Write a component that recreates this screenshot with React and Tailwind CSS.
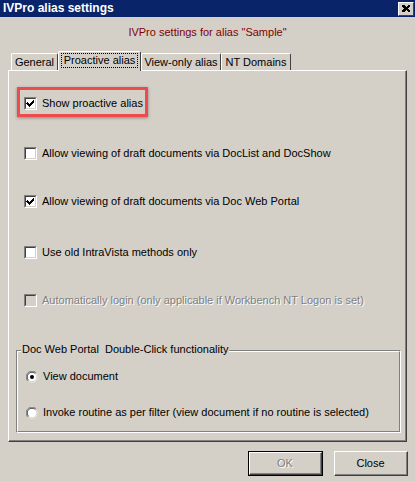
import React from "react";

function Check({ checked, disabled }) {
  return (
    <div className="w-[13px] h-[13px] shrink-0 border-t border-l border-[#808080] border-r border-b border-r-white border-b-white">
      <div
        className={
          "w-[11px] h-[11px] border-t border-l border-[#404040] border-r border-b border-r-[#d4d0c8] border-b-[#d4d0c8] flex items-center justify-center " +
          (disabled ? "bg-[#d4d0c8]" : "bg-white")
        }
      >
        {checked && (
          <svg width="9" height="9" viewBox="0 0 9 9" shapeRendering="crispEdges">
            <path d="M1 3h1v1h1v1h1v-1h1v-1h1v-1h1v-1h1v3h-1v1h-1v1h-1v1h-1v1h-1v-1h-1v-1h-1v-1h-1z" fill="#000" />
          </svg>
        )}
      </div>
    </div>
  );
}

function Radio({ checked }) {
  return (
    <svg width="12" height="12" viewBox="0 0 12 12" className="shrink-0">
      <circle cx="6" cy="6" r="5.5" fill="#fff" />
      <path d="M10.2 1.8A5.5 5.5 0 0 0 1.8 10.2" stroke="#808080" strokeWidth="1" fill="none" />
      <path d="M9.4 2.6A4.5 4.5 0 0 0 2.6 9.4" stroke="#404040" strokeWidth="1" fill="none" />
      <path d="M9.4 2.6A4.5 4.5 0 0 1 2.6 9.4" stroke="#d4d0c8" strokeWidth="1" fill="none" />
      {checked && <circle cx="6" cy="6" r="2" fill="#000" />}
    </svg>
  );
}

function Row({ checked, disabled, children, className }) {
  return (
    <div className={"flex items-center gap-[5px] " + (className || "")}>
      <Check checked={checked} disabled={disabled} />
      <span
        className={
          "leading-[13px] whitespace-nowrap " +
          (disabled ? "text-[#808080] [text-shadow:1px_1px_0_#fff]" : "")
        }
      >
        {children}
      </span>
    </div>
  );
}

const tabs = [
  { label: "General", w: "w-[47px]" },
  { label: "Proactive alias", w: "w-[83px]" },
  { label: "View-only alias", w: "w-[80px]" },
  { label: "NT Domains", w: "w-[70px]" },
];

export default function App() {
  return (
    <div className="w-[415px] h-[481px] bg-[#d4d0c8] font-['Liberation_Sans',Arial,sans-serif] text-[11px] text-black overflow-hidden select-none">
      {/* title bar */}
      <div className="h-[17px] bg-[#0a246a] flex items-center justify-between pl-[3px] pr-[1px]">
        <span className="text-white font-bold text-[12px] leading-[17px]">IVPro alias settings</span>
        <div className="w-[16px] h-[14px] bg-[#d4d0c8] border-t border-l border-white border-r border-b border-r-[#404040] border-b-[#404040] flex items-center justify-center">
          <svg width="8" height="7" viewBox="0 0 8 7" shapeRendering="crispEdges">
            <path d="M0 0h2l2 2 2-2h2v1l-2 2.5 2 2.5v1h-2l-2-2-2 2h-2v-1l2-2.5-2-2.5z" fill="#000" />
          </svg>
        </div>
      </div>

      {/* subtitle */}
      <div className="mt-[8px] h-[14px] leading-[14px] text-center text-[#800000]">
        IVPro settings for alias "Sample"
      </div>

      {/* tabs */}
      <div className="mt-[12px] ml-[11px] flex items-end h-[19px] relative z-10">
        {tabs.map((t, i) => {
          const active = i === 1;
          return (
            <div
              key={t.label}
              className={
                "border-t border-l border-white border-r border-r-[#404040] rounded-t-[2px] flex items-start justify-center whitespace-nowrap " +
                t.w +
                (active ? " h-[20px] -mb-px bg-[#d4d0c8] pt-[2px]" : " h-[17px] pt-[2px]")
              }
            >
              <span
                className={
                  "leading-[13px] " +
                  (active ? "border border-dotted border-black px-[2px] -mt-px" : "")
                }
              >
                {t.label}
              </span>
            </div>
          );
        })}
      </div>

      {/* panel */}
      <div className="mx-[8px] h-[372px] border-t border-l border-white border-r border-b border-r-[#404040] border-b-[#404040]">
        <div className="h-full border-r border-b border-r-[#808080] border-b-[#808080] flex flex-col">
          <div className="mt-[16px] ml-[8px] w-[131px] h-[30px] border-[3px] border-[#ef4a4d] shadow-[0_1px_3px_rgba(0,0,0,0.35)] pl-[4px] pt-[7px]">
            <Row checked>Show proactive alias</Row>
          </div>

          <Row className="mt-[30px] ml-[15px]">Allow viewing of draft documents via DocList and DocShow</Row>
          <Row checked className="mt-[35px] ml-[15px]">Allow viewing of draft documents via Doc Web Portal</Row>
          <Row className="mt-[38px] ml-[15px]">Use old IntraVista methods only</Row>
          <Row disabled className="mt-[35px] ml-[15px]">
            Automatically login (only applicable if Workbench NT Logon is set)
          </Row>

          {/* group box */}
          <div className="relative mt-[43px] ml-[7px] w-[385px] h-[83px] border-t border-l border-[#808080] border-r border-b border-r-white border-b-white">
            <div className="h-full border-t border-l border-white border-r border-b border-r-[#808080] border-b-[#808080] flex flex-col pl-[8px]">
              <div className="flex items-center gap-[5px] mt-[18px]">
                <Radio checked />
                <span className="leading-[13px]">View document</span>
              </div>
              <div className="flex items-center gap-[5px] mt-[23px]">
                <Radio />
                <span className="leading-[13px] whitespace-nowrap">Invoke routine as per filter (view document if no routine is selected)</span>
              </div>
            </div>
            <span className="absolute -top-[8px] left-[4px] px-[1px] bg-[#d4d0c8] leading-[13px]">
              Doc Web Portal&nbsp; Double-Click functionality
            </span>
          </div>
        </div>
      </div>

      {/* buttons */}
      <div className="mt-[9px] flex justify-end gap-[11px] pr-[7px]">
        <div className="w-[75px] h-[25px] border border-black">
          <div className="h-full border-t border-l border-white border-r border-b border-r-[#404040] border-b-[#404040]">
            <div className="h-full border-r border-b border-r-[#808080] border-b-[#808080] flex items-center justify-center text-[#808080] [text-shadow:1px_1px_0_#fff]">
              OK
            </div>
          </div>
        </div>
        <div className="w-[74px] h-[25px] border-t border-l border-white border-r border-b border-r-[#404040] border-b-[#404040]">
          <div className="h-full border-r border-b border-r-[#808080] border-b-[#808080] flex items-center justify-center">
            Close
          </div>
        </div>
      </div>
    </div>
  );
}
